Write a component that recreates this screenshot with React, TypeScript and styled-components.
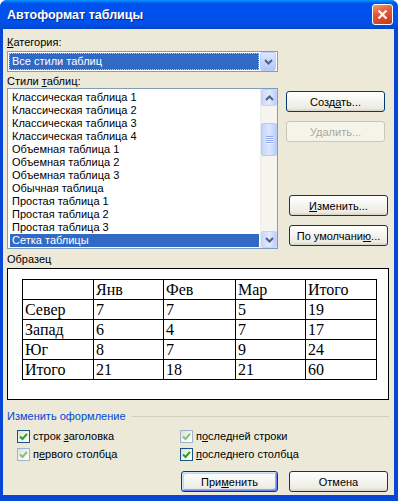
import React from 'react';
import styled, { createGlobalStyle } from 'styled-components';

const GlobalStyle = createGlobalStyle`
  html, body {
    margin: 0;
    padding: 0;
    background: #fff;
  }
  body {
    font-family: "Liberation Sans", Arial, sans-serif;
    font-size: 11px;
    color: #000;
  }
`;

const Window = styled.div`
  width: 398px;
  height: 501px;
  display: flex;
  flex-direction: column;
  background: #0846d8;
  border-radius: 7px 7px 0 0;
  overflow: hidden;
`;

const TitleBar = styled.div`
  height: 29px;
  flex: none;
  display: flex;
  align-items: center;
  padding: 0 5px 0 7px;
  background: linear-gradient(
    180deg,
    #0997ff 0%,
    #0053ee 12%,
    #0050ee 50%,
    #0050e8 85%,
    #0042c6 100%
  );
`;

const Title = styled.div`
  color: #fff;
  font-weight: bold;
  font-size: 12.5px;
  text-shadow: 1px 1px 0 #0b2a8a;
  padding-top: 1px;
`;

const CloseButton = styled.div`
  margin-left: auto;
  width: 21px;
  height: 21px;
  box-sizing: border-box;
  border: 1px solid #fff;
  border-radius: 3px;
  background: linear-gradient(160deg, #ee9a80 0%, #e2613d 35%, #cf4423 80%, #c23a1d 100%);
  display: flex;
  align-items: center;
  justify-content: center;
`;

const Body = styled.div`
  flex: 1;
  margin: 0 4px 6px 3px;
  background: #ece9d8;
  padding: 7px 5px 0 4px;
  display: flex;
  flex-direction: column;
`;

const Label = styled.div<{ $gap?: number }>`
  line-height: 13px;
  margin-top: ${({ $gap }) => $gap ?? 0}px;
`;

const Key = styled.span`
  text-decoration: underline;
`;

const Combo = styled.div`
  margin-top: 2px;
  width: 271px;
  height: 21px;
  box-sizing: border-box;
  border: 1px solid #7f9db9;
  background: #fff;
  display: flex;
  align-items: center;
  padding: 0 1px 0 1px;
`;

const ComboValue = styled.div`
  flex: 1;
  height: 17px;
  margin-right: 1px;
  box-sizing: border-box;
  background: #316ac5;
  color: #fff;
  line-height: 15px;
  padding-left: 2px;
  border: 1px dotted #e8c36a;
`;

const DropButton = styled.div`
  width: 16px;
  height: 19px;
  box-sizing: border-box;
  border: 1px solid #b9cefb;
  border-radius: 2px;
  background: linear-gradient(180deg, #dde8ff 0%, #c3d4fb 60%, #b3c7f6 100%);
  display: flex;
  align-items: center;
  justify-content: center;
`;

const StylesRow = styled.div`
  display: flex;
  height: 161px;
`;

const ListBox = styled.div`
  width: 271px;
  box-sizing: border-box;
  border: 1px solid #7f9db9;
  background: #fff;
  display: flex;
`;

const Items = styled.div`
  flex: 1;
  padding: 2px 1px 0 2px;
`;

const Item = styled.div<{ $selected?: boolean }>`
  height: 13px;
  line-height: 13px;
  padding-left: 2px;
  white-space: nowrap;
  background: ${({ $selected }) => ($selected ? '#316ac5' : 'transparent')};
  color: ${({ $selected }) => ($selected ? '#fff' : '#000')};
`;

const ScrollBar = styled.div`
  width: 17px;
  display: flex;
  flex-direction: column;
  background: #f5f4ef;
  border-left: 1px solid #eeede5;
  box-sizing: border-box;
`;

const ScrollArrow = styled.div`
  height: 17px;
  box-sizing: border-box;
  border: 1px solid #c3d3fd;
  border-radius: 2px;
  background: linear-gradient(90deg, #c8d8fd 0%, #e2eafe 50%, #bccff9 100%);
  display: flex;
  align-items: center;
  justify-content: center;
`;

const Track = styled.div`
  flex: 1;
  padding-top: 17px;
`;

const Thumb = styled.div`
  height: 33px;
  box-sizing: border-box;
  border: 1px solid #b6cbf6;
  border-radius: 2px;
  background: linear-gradient(90deg, #c4d5fc 0%, #dce6fe 50%, #bdd0fa 100%);
  display: flex;
  flex-direction: column;
  align-items: center;
  justify-content: center;
  gap: 1px;
`;

const Grip = styled.div`
  width: 7px;
  height: 1px;
  background: #8ea9ea;
  box-shadow: 0 1px 0 #eef3ff;
`;

const ButtonColumn = styled.div`
  margin-left: 8px;
  display: flex;
  flex-direction: column;
  padding-top: 3px;
  padding-bottom: 3px;
`;

const Button = styled.button<{ $width?: number; $default?: boolean; $shift?: number }>`
  width: ${({ $width }) => $width ?? 99}px;
  height: 21px;
  margin-left: ${({ $shift }) => $shift ?? 0}px;
  padding: 0;
  box-sizing: border-box;
  font-family: "Liberation Sans", Arial, sans-serif;
  font-size: 11px;
  color: #000;
  border: 1px solid #003c74;
  border-radius: 3px;
  background: linear-gradient(180deg, #ffffff 0%, #f6f6f2 40%, #ecebe4 85%, #d8d2c6 100%);
  box-shadow: ${({ $default }) =>
    $default ? 'inset 1px 1px 0 #cee7ff, inset -1px -1px 0 #6982ee, inset 2px 2px 0 #bcd4f6, inset -2px -2px 0 #89ade4' : 'none'};

  &:disabled {
    color: #aca899;
    border-color: #c9c7ba;
    background: #f5f4ea;
  }
`;

const Preview = styled.div`
  margin-top: 2px;
  height: 132px;
  box-sizing: border-box;
  border: 1px solid #000;
  background: #fff;
  padding: 10px 0 0 14px;
`;

const SampleTable = styled.table`
  border-collapse: collapse;
  table-layout: fixed;
  width: 355px;
  font-family: "Liberation Serif", "Times New Roman", serif;
  font-size: 16px;
`;

const Cell = styled.td`
  border: 1px solid #000;
  height: 19px;
  line-height: 19px;
  padding: 0 0 0 2px;
  white-space: nowrap;
`;

const GroupHeader = styled.div`
  margin-top: 10px;
  display: flex;
  align-items: center;
  gap: 6px;
  line-height: 13px;
  color: #0046d5;
`;

const GroupLine = styled.div`
  flex: 1;
  height: 1px;
  background: #d0d0bf;
`;

const Checks = styled.div`
  margin-top: 4px;
  padding-left: 10px;
  display: grid;
  grid-template-columns: 163px 1fr;
  grid-auto-rows: 18px;
`;

const CheckItem = styled.label`
  display: flex;
  align-items: center;
  gap: 3px;
`;

const Box = styled.span<{ $dim?: boolean }>`
  width: 13px;
  height: 13px;
  box-sizing: border-box;
  border: 1px solid ${({ $dim }) => ($dim ? '#9fb4cc' : '#1c5180')};
  background: linear-gradient(135deg, #dcdcd7 0%, #f6f6f3 60%, #ffffff 100%);
  display: flex;
  align-items: center;
  justify-content: center;
`;

const Footer = styled.div`
  margin-top: 8px;
  display: flex;
  justify-content: flex-end;
  gap: 11px;
  padding-right: 1px;
`;

const styles = [
  'Классическая таблица 1',
  'Классическая таблица 2',
  'Классическая таблица 3',
  'Классическая таблица 4',
  'Объемная таблица 1',
  'Объемная таблица 2',
  'Объемная таблица 3',
  'Обычная таблица',
  'Простая таблица 1',
  'Простая таблица 2',
  'Простая таблица 3',
  'Сетка таблицы',
];

const sample = [
  ['', 'Янв', 'Фев', 'Мар', 'Итого'],
  ['Север', '7', '7', '5', '19'],
  ['Запад', '6', '4', '7', '17'],
  ['Юг', '8', '7', '9', '24'],
  ['Итого', '21', '18', '21', '60'],
];

const colWidths = [71, 70, 72, 70, 71];

const Chevron = ({ up }: { up?: boolean }) => (
  <svg width="9" height="6" viewBox="0 0 9 6">
    <path
      d={up ? 'M1 5 L4.5 1.5 L8 5' : 'M1 1 L4.5 4.5 L8 1'}
      fill="none"
      stroke="#4d6185"
      strokeWidth="2"
    />
  </svg>
);

const Check = ({ dim }: { dim?: boolean }) => (
  <svg width="9" height="9" viewBox="0 0 9 9">
    <path
      d="M1 4.5 L3.5 7 L8 1.8"
      fill="none"
      stroke={dim ? '#7cc47c' : '#21a121'}
      strokeWidth="2"
    />
  </svg>
);

const CheckBox = ({ dim, children }: { dim?: boolean; children: React.ReactNode }) => (
  <CheckItem>
    <Box $dim={dim}>
      <Check dim={dim} />
    </Box>
    <span>{children}</span>
  </CheckItem>
);

export default function App() {
  return (
    <>
      <GlobalStyle />
      <Window>
        <TitleBar>
          <Title>Автоформат таблицы</Title>
          <CloseButton>
            <svg width="11" height="11" viewBox="0 0 11 11">
              <path d="M1.5 1.5 L9.5 9.5 M9.5 1.5 L1.5 9.5" stroke="#fff" strokeWidth="2.2" />
            </svg>
          </CloseButton>
        </TitleBar>
        <Body>
          <Label>
            <Key>К</Key>атегория:
          </Label>
          <Combo>
            <ComboValue>Все стили таблиц</ComboValue>
            <DropButton>
              <Chevron />
            </DropButton>
          </Combo>
          <Label $gap={3}>
            Стили <Key>т</Key>аблиц:
          </Label>
          <StylesRow>
            <ListBox>
              <Items>
                {styles.map((s, i) => (
                  <Item key={s} $selected={i === styles.length - 1}>
                    {s}
                  </Item>
                ))}
              </Items>
              <ScrollBar>
                <ScrollArrow>
                  <Chevron up />
                </ScrollArrow>
                <Track>
                  <Thumb>
                    <Grip />
                    <Grip />
                    <Grip />
                    <Grip />
                  </Thumb>
                </Track>
                <ScrollArrow>
                  <Chevron />
                </ScrollArrow>
              </ScrollBar>
            </ListBox>
            <ButtonColumn>
              <Button>
                Созд<Key>а</Key>ть...
              </Button>
              <Button disabled style={{ marginTop: 9 }}>
                Удалить...
              </Button>
              <Button $shift={3} style={{ marginTop: 'auto' }}>
                <Key>И</Key>зменить...
              </Button>
              <Button $shift={3} style={{ marginTop: 9 }}>
                По умолчани<Key>ю</Key>...
              </Button>
            </ButtonColumn>
          </StylesRow>
          <Label $gap={4}>Образец</Label>
          <Preview>
            <SampleTable>
              <colgroup>
                {colWidths.map((w, i) => (
                  <col key={i} style={{ width: w }} />
                ))}
              </colgroup>
              <tbody>
                {sample.map((row, r) => (
                  <tr key={r}>
                    {row.map((c, i) => (
                      <Cell key={i}>{c}</Cell>
                    ))}
                  </tr>
                ))}
              </tbody>
            </SampleTable>
          </Preview>
          <GroupHeader>
            Изменить оформление
            <GroupLine />
          </GroupHeader>
          <Checks>
            <CheckBox>
              строк <Key>з</Key>аголовка
            </CheckBox>
            <CheckBox dim>
              п<Key>о</Key>следней строки
            </CheckBox>
            <CheckBox dim>
              п<Key>е</Key>рвого столбца
            </CheckBox>
            <CheckBox>
              <Key>п</Key>оследнего столбца
            </CheckBox>
          </Checks>
          <Footer>
            <Button $width={97} $default>
              При<Key>м</Key>енить
            </Button>
            <Button $width={99}>Отмена</Button>
          </Footer>
        </Body>
      </Window>
    </>
  );
}
